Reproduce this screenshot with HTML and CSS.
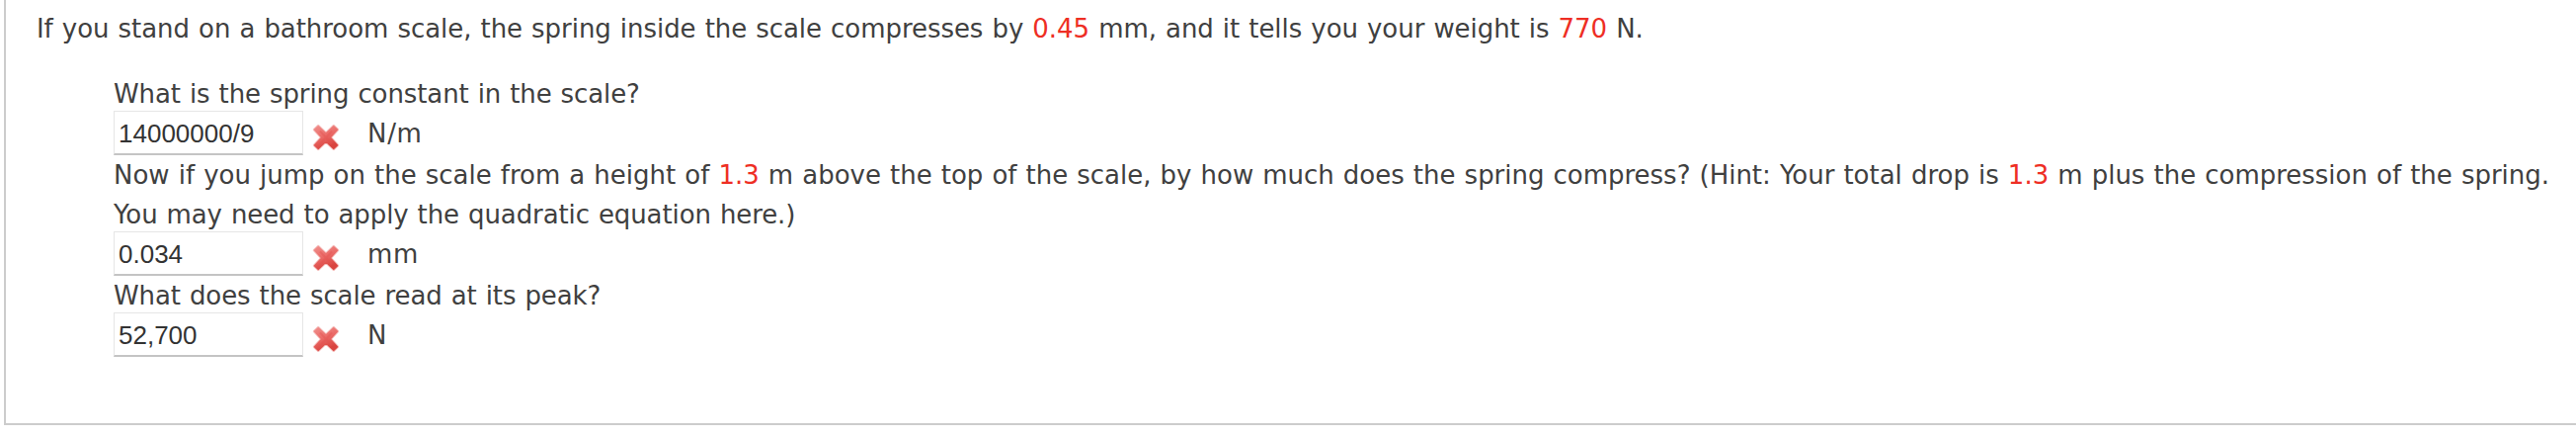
FILE: index.html
```
<!DOCTYPE html>
<html lang="en">
<head>
    <meta charset="UTF-8">
    <title>Spring scale</title>
    <link rel="stylesheet" href="styles.css">
</head>
<body>
    <svg class="defs" width="0" height="0">
        <defs>
            <linearGradient id="red" x1="0" y1="0" x2="0.4" y2="1">
                <stop offset="0" stop-color="#f08d8a"/>
                <stop offset="0.55" stop-color="#ea6865"/>
                <stop offset="1" stop-color="#d9443f"/>
            </linearGradient>
            <symbol id="wrong" viewBox="0 0 28 28">
                <path d="M6.2 2.2 14 9.6 21.8 2.2 26 6.2 18.8 14 26 21.8 21.8 25.8 14 18.4 6.2 25.8 2 21.8 9.2 14 2 6.2Z" fill="none" stroke="#f5bcba" stroke-width="2.4" stroke-linejoin="round"/>
                <path d="M6.2 2.9 14 10.2 21.8 2.9 25.3 6.2 18.2 14 25.3 21.8 21.8 25.1 14 17.8 6.2 25.1 2.7 21.8 9.8 14 2.7 6.2Z" fill="url(#red)" stroke="url(#red)" stroke-width="1.6" stroke-linejoin="round"/>
                <path d="M8 7.5 14 14 20 7.5M8 20.5 14 14 20 20.5" fill="none" stroke="#e4524f" stroke-opacity="0.4" stroke-width="2"/>
            </symbol>
        </defs>
    </svg>
    <div class="question">
        <p class="intro">If you stand on a bathroom scale, the spring inside the scale compresses by <span class="num">0.45</span> mm, and it tells you your weight is <span class="num">770</span> N.</p>
        <div class="parts">
            <p>What is the spring constant in the scale?</p>
            <div class="answer">
                <input type="text" value="14000000/9">
                <svg class="mark"><use href="#wrong"/></svg>
                <span class="unit">N/m</span>
            </div>
            <p class="long">Now if you jump on the scale from a height of <span class="num">1.3</span> m above the top of the scale, by how much does the spring compress? (Hint: Your total drop is <span class="num">1.3</span> m plus the compression of the spring.</p>
            <p>You may need to apply the quadratic equation here.)</p>
            <div class="answer">
                <input type="text" value="0.034">
                <svg class="mark"><use href="#wrong"/></svg>
                <span class="unit">mm</span>
            </div>
            <p>What does the scale read at its peak?</p>
            <div class="answer">
                <input type="text" value="52,700">
                <svg class="mark"><use href="#wrong"/></svg>
                <span class="unit">N</span>
            </div>
        </div>
    </div>
</body>
</html>
```
FILE: styles.css
```
body,p{ margin: 0;}
body{
    overflow: hidden;
    background-color: #fff;
    color: #404040;
    font-family: Verdana, "DejaVu Sans", sans-serif;
    font-size: 26px;
    line-height: 40px;
    word-spacing: 0.88px;
    letter-spacing: -0.1px;
}
.defs{
    display: block;
}
.question{
    box-sizing: border-box;
    height: 430px;
    margin-left: 4px;
    padding: 9px 0 0 29px;
    border-left: 2px solid #ccc;
    border-bottom: 2px solid #ccc;
    white-space: nowrap;
}
.intro{
    padding-left: 2px;
    letter-spacing: -0.05px;
}
.num{
    color: #ee2e24;
}
.parts{
    margin: 26px 0 0 80px;
}
.parts .long{
    letter-spacing: -0.02px;
}
.answer{
    display: flex;
    height: 42px;
}
.answer input{
    box-sizing: border-box;
    width: 192px;
    height: 45px;
    margin: -3px 0 0;
    padding: 2px 4px 0;
    border: 1px solid #e6e6e6;
    border-bottom: 2px solid #c4c4c4;
    background-color: #fff;
    color: #333;
    font-family: "Liberation Sans", Arial, sans-serif;
    font-size: 26px;
}
.mark{
    width: 28px;
    height: 28px;
    margin: 10px 28px 0 9px;
}
.unit{
    letter-spacing: 0.7px;
}
```
